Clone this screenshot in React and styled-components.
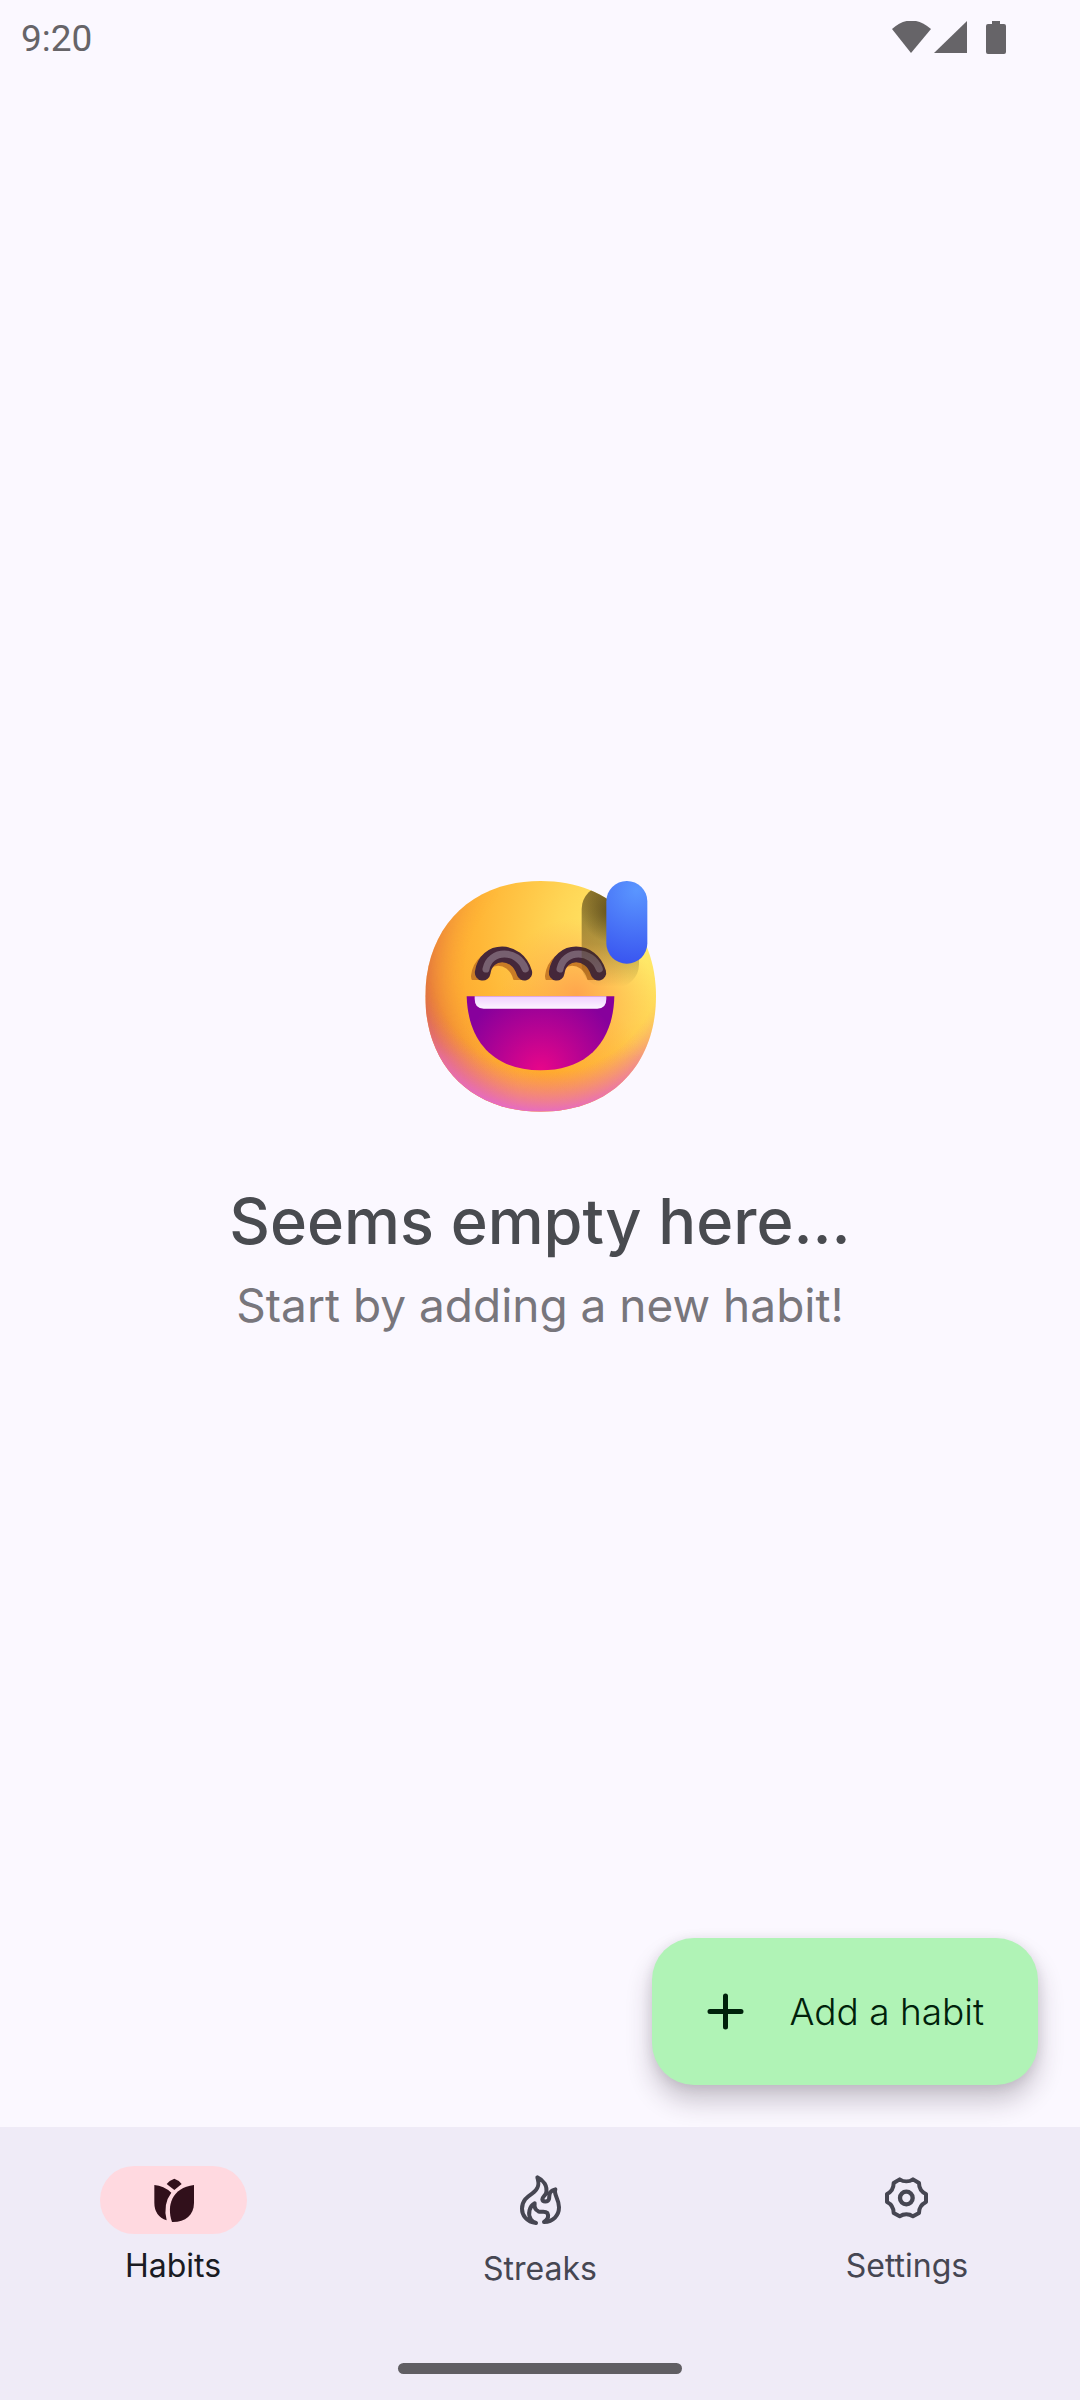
import React from "react";
import styled, { createGlobalStyle } from "styled-components";

const GlobalStyle = createGlobalStyle`
  *, *::before, *::after { box-sizing: border-box; }
  body {
    margin: 0;
    background: #fbf8ff;
    font-family: Inter, "Open Sans", sans-serif;
    font-optical-sizing: none;
  }
`;

const Screen = styled.div`
  display: flex;
  flex-direction: column;
  min-height: 100vh;
  background: #fbf8ff;
`;

const StatusBar = styled.header`
  display: flex;
  align-items: center;
  justify-content: space-between;
  height: 75px;
  padding: 2px 74px 0 21px;
  color: #666468;
`;

const Clock = styled.time`
  font-family: Roboto, sans-serif;
  font-size: 37px;
  line-height: 44px;
`;

const StatusIcons = styled.svg`
  width: 116px;
  height: 36px;
  fill: currentColor;
`;

const Main = styled.main`
  position: relative;
  display: flex;
  flex: 1;
  flex-direction: column;
  align-items: center;
  justify-content: center;
  text-align: center;
`;

const Emoji = styled.svg`
  width: 260px;
  height: 260px;
  margin-bottom: 54px;
`;

const Title = styled.h1`
  margin: 0 0 11px;
  color: #494b50;
  font-size: 63px;
  font-weight: 500;
  line-height: 84px;
`;

const Subtitle = styled.p`
  margin: 0;
  color: #78767c;
  font-size: 46px;
  font-weight: 400;
  line-height: 63px;
`;

const Fab = styled.button`
  position: absolute;
  right: 42px;
  bottom: 42px;
  display: flex;
  align-items: center;
  gap: 33px;
  height: 147px;
  padding: 0 54px 0 42px;
  border: 0;
  border-radius: 42px;
  background: #b0f3b6;
  box-shadow: 0 16px 26px rgba(40, 30, 45, 0.24), 0 2px 12px rgba(40, 30, 45, 0.1);
  color: #00210b;
  font-family: inherit;
  font-size: 37px;
  font-weight: 300;
  line-height: 52px;
  cursor: pointer;
`;

const PlusIcon = styled.svg`
  width: 63px;
  height: 63px;
  fill: none;
  stroke: currentColor;
  stroke-width: 5;
  stroke-linecap: round;
`;

const NavBar = styled.nav`
  display: flex;
  flex-direction: column;
  align-items: center;
  justify-content: space-between;
  height: 273px;
  padding: 39px 0 26px;
  background: #efebf7;
`;

const NavItems = styled.div`
  display: flex;
  gap: 21px;
  width: 100%;
`;

const NavItem = styled.a`
  display: flex;
  flex: 1;
  flex-direction: column;
  align-items: center;
  gap: 11px;
  color: ${(p) => (p.$active ? "#1a1b23" : "#464652")};
  font-size: 32px;
  font-weight: 400;
  line-height: 42px;
  text-decoration: none;
`;

const Indicator = styled.span`
  display: flex;
  align-items: center;
  justify-content: center;
  width: 147px;
  padding: 2px 0;
  border-radius: 34px;
  background: ${(p) => (p.$active ? "#ffd9e0" : "transparent")};
  color: ${(p) => (p.$active ? "#31101b" : "inherit")};
`;

const NavIcon = styled.svg`
  width: 64px;
  height: ${(p) => p.$height}px;
  fill: ${(p) => (p.$filled ? "currentColor" : "none")};
  stroke: ${(p) => (p.$filled ? "none" : "currentColor")};
  stroke-width: 12;
  stroke-linecap: round;
  stroke-linejoin: round;
`;

const HomeHandle = styled.div`
  width: 284px;
  height: 11px;
  border-radius: 6px;
  background: #605e63;
`;

function SweatSmile() {
  return (
    <Emoji viewBox="0 0 780 780" role="img" aria-label="Grinning face with sweat">
      <defs>
        <radialGradient id="base" gradientUnits="userSpaceOnUse" cx="690" cy="210" r="660">
          <stop offset="0" stopColor="#fff070" />
          <stop offset="0.38" stopColor="#ffd656" />
          <stop offset="0.74" stopColor="#ffb636" />
          <stop offset="1" stopColor="#fca22e" />
        </radialGradient>
        <radialGradient id="rim" gradientUnits="userSpaceOnUse" cx="460" cy="330" r="425">
          <stop offset="0.7" stopColor="#f08040" stopOpacity="0" />
          <stop offset="1" stopColor="#d45f45" stopOpacity="0.9" />
        </radialGradient>
        <radialGradient id="warm" gradientUnits="userSpaceOnUse" cx="500" cy="390" r="230">
          <stop offset="0" stopColor="#ffa04c" stopOpacity="0.9" />
          <stop offset="1" stopColor="#ffa84a" stopOpacity="0" />
        </radialGradient>
        <radialGradient id="chin" gradientUnits="userSpaceOnUse" cx="400" cy="640" r="300">
          <stop offset="0" stopColor="#ffa82e" stopOpacity="0.9" />
          <stop offset="1" stopColor="#ffa82e" stopOpacity="0" />
        </radialGradient>
        <linearGradient id="rimFade" x1="0" x2="1" y1="0.5" y2="0.4">
          <stop offset="0" stopColor="#fff" />
          <stop offset="0.38" stopColor="#fff" stopOpacity="0" />
        </linearGradient>
        <mask id="leftOnly">
          <rect width="780" height="780" fill="url(#rimFade)" />
        </mask>
        <radialGradient id="pink" gradientUnits="userSpaceOnUse" cx="410" cy="270" r="475">
          <stop offset="0.74" stopColor="#f070a0" stopOpacity="0" />
          <stop offset="1" stopColor="#e56ac6" />
        </radialGradient>
        <linearGradient id="pinkFade" x1="0" x2="0" y1="0" y2="1">
          <stop offset="0.44" stopColor="#fff" stopOpacity="0" />
          <stop offset="0.74" stopColor="#fff" />
        </linearGradient>
        <mask id="bottomOnly">
          <rect width="780" height="780" fill="url(#pinkFade)" />
        </mask>
        <radialGradient id="mouth" gradientUnits="userSpaceOnUse" cx="392" cy="620" r="250">
          <stop offset="0" stopColor="#e90689" />
          <stop offset="1" stopColor="#87009c" />
        </radialGradient>
        <linearGradient id="teeth" x1="0" x2="0" y1="0" y2="1">
          <stop offset="0" stopColor="#f0d0ff" />
          <stop offset="1" stopColor="#fcf5ff" />
        </linearGradient>
        <radialGradient id="drop" gradientUnits="userSpaceOnUse" cx="680" cy="75" r="220">
          <stop offset="0" stopColor="#5a96ff" />
          <stop offset="1" stopColor="#3a56f0" />
        </radialGradient>
        <linearGradient id="shade" gradientUnits="userSpaceOnUse" x1="600" x2="600" y1="80" y2="365">
          <stop offset="0" stopColor="#483710" stopOpacity="0.62" />
          <stop offset="0.55" stopColor="#483710" stopOpacity="0.4" />
          <stop offset="1" stopColor="#483710" stopOpacity="0" />
        </linearGradient>
        <radialGradient id="shadeCore" gradientUnits="userSpaceOnUse" cx="610" cy="140" r="95">
          <stop offset="0" stopColor="#3c2c0c" stopOpacity="0.65" />
          <stop offset="1" stopColor="#3c2c0c" stopOpacity="0" />
        </radialGradient>
        <clipPath id="face">
          <path d="M392 48 C610 48 738 196 738 394 C738 592 610 740 392 740 C174 740 46 592 46 394 C46 196 174 48 392 48Z" />
        </clipPath>
        <filter id="soft" x="-20%" y="-20%" width="140%" height="140%">
          <feGaussianBlur stdDeviation="2" />
        </filter>
      </defs>
      <g clipPath="url(#face)">
        <rect width="780" height="780" fill="url(#base)" />
        <rect width="780" height="780" fill="url(#chin)" />
        <rect width="780" height="780" fill="url(#warm)" />
        <rect width="780" height="780" fill="url(#rim)" mask="url(#leftOnly)" />
        <rect width="780" height="780" fill="url(#pink)" mask="url(#bottomOnly)" />
      </g>
      <g fill="none" strokeLinecap="round" strokeLinejoin="round">
        {[0, 222].map((dx) => (
          <g key={dx} transform={`translate(${dx} 0)`}>
            <path d="M206 334 C216 261 310 261 331 334" stroke="#c97c27" strokeWidth="46" filter="url(#soft)" />
            <path d="M218 323 C228 250 322 250 343 323" stroke="#45273a" strokeWidth="47" />
            <path d="M228 312 C240 252 324 252 346 312" stroke="#776070" strokeWidth="21" />
          </g>
        ))}
      </g>
      <path d="M170 394H613C610 530 532 616 392 616C252 616 174 530 170 394Z" fill="url(#mouth)" />
      <path d="M194 394H589V402Q589 431 562 431H221Q194 431 194 402Z" fill="url(#teeth)" />
      <g clipPath="url(#face)">
        <rect x="515" y="62" width="172" height="306" rx="70" fill="url(#shade)" />
        <rect x="515" y="62" width="172" height="306" rx="70" fill="url(#shadeCore)" />
      </g>
      <rect x="589" y="48" width="123" height="248" rx="61" fill="url(#drop)" />
    </Emoji>
  );
}

const destinations = [
  {
    label: "Habits",
    active: true,
    filled: true,
    height: 64,
    viewBox: "182 84 192 192",
    art: (
      <>
        <path d="M282 116Q295 120 304 132L282 150L259 132Q269 120 282 116Z" />
        <path d="M222 135Q250 137 273 158Q247 192 259 241Q222 228 222 188Z" />
        <path d="M341 135V188C341 226 314 247 275 246C258 198 274 143 341 135Z" />
      </>
    ),
  },
  {
    label: "Streaks",
    height: 67,
    viewBox: "144 54 192 201",
    art: (
      <path d="M228 219C200 216 186 196 186 176C186 150 204 139 217 130C233 119 240 106 232 82C250 90 264 108 258 130C254 138 247 141 247 148C248 157 264 157 267 147C269 136 265 123 286 118C280 134 297 145 297 172C297 196 280 215 252 216C264 208 267 198 262 189C254 181 244 188 235 184C225 179 222 172 224 160C208 168 203 192 212 207C216 213 222 217 228 219Z" />
    ),
  },
  {
    label: "Settings",
    height: 64,
    viewBox: "164 54 192 192",
    art: (
      <>
        <circle cx="258" cy="144" r="19" strokeWidth="13" />
        <path d="M238 88C250 96 266 96 278 88L296 99C296 114 302 125 317 132V156C303 163 296 174 296 189L278 199C266 191 250 191 238 199L220 189C220 174 214 163 200 156V132C214 125 220 114 220 99Z" />
      </>
    ),
  },
];

export default function App() {
  return (
    <Screen>
      <GlobalStyle />
      <StatusBar>
        <Clock>9:20</Clock>
        <StatusIcons viewBox="0 2 116 36" aria-hidden="true">
          <path d="M2 10Q21 -7 41 10L21 34Z" />
          <path d="M77 2V34H44Z" />
          <path d="M102 2h8v3h4a2 2 0 0 1 2 2v26a2 2 0 0 1-2 2h-16a2 2 0 0 1-2-2v-26a2 2 0 0 1 2-2h4Z" />
        </StatusIcons>
      </StatusBar>
      <Main>
        <SweatSmile />
        <Title>Seems empty here...</Title>
        <Subtitle>Start by adding a new habit!</Subtitle>
        <Fab type="button">
          <PlusIcon viewBox="0 0 63 63" aria-hidden="true">
            <path d="M31.5 16V47M16 31.5H47" />
          </PlusIcon>
          Add a habit
        </Fab>
      </Main>
      <NavBar>
        <NavItems>
          {destinations.map((d) => (
            <NavItem
              key={d.label}
              href={`#${d.label.toLowerCase()}`}
              $active={d.active}
              aria-current={d.active ? "page" : undefined}
            >
              <Indicator $active={d.active}>
                <NavIcon viewBox={d.viewBox} $height={d.height} $filled={d.filled} aria-hidden="true">
                  {d.art}
                </NavIcon>
              </Indicator>
              {d.label}
            </NavItem>
          ))}
        </NavItems>
        <HomeHandle />
      </NavBar>
    </Screen>
  );
}
